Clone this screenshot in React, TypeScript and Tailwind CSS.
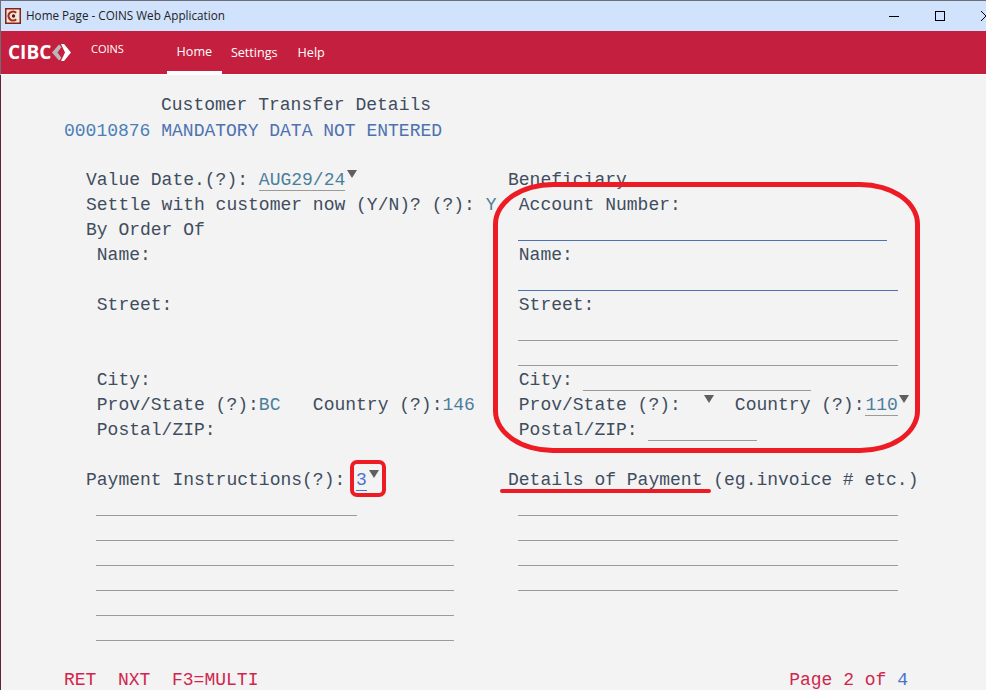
import type { ReactNode } from 'react';

const LABEL = 'text-[#3f4d5e]';

// one 25px terminal row, left and right column
const Row = ({ left, right }: { left?: ReactNode; right?: ReactNode }) => (
    <div className="grid h-[25px] grid-cols-[422px_1fr] pl-[85px] leading-[27px]">
        <div className="flex whitespace-pre">{left}</div>
        <div className="flex whitespace-pre">{right}</div>
    </div>
);

const Line = ({ width, className = 'border-[#9b9b9b]', indent = 'ml-[10px]' }: { width: string; className?: string; indent?: string }) => (
    <div className={`h-[24px] border-b ${width} ${className} ${indent}`} />
);

const Value = ({ text, className, width }: { text: string; className: string; width: string }) => (
    <span className={`h-[24px] border-b leading-[27px] ${width} ${className}`}>{text}</span>
);

const Arrow = ({ className = '' }: { className?: string }) => (
    <svg width="10" height="8" viewBox="0 0 10 8" className={`mt-[3px] shrink-0 ${className}`}>
        <polygon points="0,0 10,0 5,8" fill="#5f5f5f" />
    </svg>
);

const Text = ({ children }: { children: ReactNode }) => <span className={LABEL}>{children}</span>;

const App = () => {
    return (
        <div className="relative h-screen w-full overflow-hidden bg-[#f3f3f3] font-['Liberation_Mono',monospace] text-[18px]">
            {/* title bar */}
            <div className="flex h-[31px] items-center border-t border-l border-[#6d6f78] bg-[#d1e2fc] pl-[4px] font-['Open_Sans',sans-serif] text-[11.7px] text-[#222222]">
                <svg width="16" height="16" viewBox="0 0 16 16" className="shrink-0">
                    <rect x="0.75" y="0.75" width="14.5" height="14.5" fill="#f3e6dc" stroke="#8a2010" strokeWidth="1.5" />
                    <path d="M11.2 4.8 A4.5 4.5 0 1 0 11.2 11.2" fill="none" stroke="#a52a18" strokeWidth="2.2" />
                    <circle cx="8.5" cy="8" r="1.7" fill="#5c1a10" />
                </svg>
                <span className="ml-[5px]">Home Page - COINS Web Application</span>
                <div className="ml-auto flex items-center">
                    <div className="h-px w-[10px] bg-black" />
                    <div className="ml-[36px] h-[10px] w-[10px] border border-black" />
                    <svg width="5" height="10" viewBox="0 0 5 10" className="ml-[36px]">
                        <path d="M0 0 L5 5 L0 10" fill="none" stroke="#000" />
                    </svg>
                </div>
            </div>

            {/* nav */}
            <div className="flex h-[44px] border-b border-l border-b-white border-l-[#6d6f78] bg-[#c41f3e] font-['Open_Sans',sans-serif] text-[12.6px] text-white">
                <div className="ml-[7px] flex w-[83px] items-center pb-[1px]">
                    <span className="text-[19px] leading-none font-bold">CIBC</span>
                    <svg width="19" height="17" viewBox="0 0 19 17" className="ml-[1px]">
                        <polygon points="7,0.5 0,8.5 7,16.5 9.5,14 5.5,8.5 9.5,3" fill="#b9b9b9" />
                        <polygon points="9,0 12,0 19,8.5 12,17 9,17 13,8.5" fill="#ffffff" />
                    </svg>
                </div>
                <span className="mt-[10px] text-[11px] leading-[16px]">COINS</span>
                <div className="ml-[43px] flex h-[43px] w-[55px] justify-center border-b-[3px] border-white pt-[12px] leading-[18px]">Home</div>
                <span className="ml-[9px] pt-[13px] leading-[18px]">Settings</span>
                <span className="ml-[20px] pt-[13px] leading-[18px]">Help</span>
            </div>

            <div className="border-l border-[#5c2535] pt-[17px]">
                <div className="h-[25px] pl-[160px] leading-[27px] whitespace-pre"><Text>Customer Transfer Details</Text></div>
                <div className="h-[50px] pl-[63px] leading-[29px] whitespace-pre">
                    <span className="text-[#4a80b8]">00010876</span>
                    <span className="text-[#4d72b0]"> MANDATORY DATA NOT ENTERED</span>
                </div>

                <Row
                    left={<><Text>Value Date.(?): </Text><Value text="AUG29/24" className="border-[#9b9b9b] text-[#4a7f9c]" width="w-[86.4px]" /><Arrow className="ml-[2px]" /></>}
                    right={<Text>Beneficiary</Text>}
                />
                <Row
                    left={<><Text>Settle with customer now (Y/N)? (?): </Text><span className="text-[#4a7f9c]">Y</span></>}
                    right={<Text> Account Number:</Text>}
                />
                <Row left={<Text>By Order Of</Text>} right={<Line width="w-[369px]" className="border-[#4a72b4]" />} />
                <Row left={<Text> Name:</Text>} right={<Text> Name:</Text>} />
                <Row right={<Line width="w-[380px]" className="border-[#4a72b4]" />} />
                <Row left={<Text> Street:</Text>} right={<Text> Street:</Text>} />
                <Row right={<Line width="w-[380px]" />} />
                <Row right={<Line width="w-[380px]" />} />
                <Row left={<Text> City:</Text>} right={<><Text> City: </Text><Line width="w-[228px]" indent="ml-[-1px]" /></>} />
                <Row
                    left={<><Text> Prov/State (?):</Text><span className="text-[#4a7f9c]">BC</span><Text>   Country (?):</Text><span className="text-[#4a7f9c]">146</span></>}
                    right={<>
                        <Text> Prov/State (?):</Text>
                        <span className="w-[23px]" />
                        <Arrow />
                        <span className="w-[21px]" />
                        <Text>Country (?):</Text>
                        <span className="w-[1px]" />
                        <Value text="110" className="border-[#9b9b9b] text-[#4a7f9c]" width="w-[32.4px]" />
                        <Arrow className="ml-[1px]" />
                    </>}
                />
                <Row left={<Text> Postal/ZIP:</Text>} right={<><Text> Postal/ZIP: </Text><Line width="w-[109px]" indent="ml-0" /></>} />
                <Row />
                <Row
                    left={<><Text>Payment Instructions(?): </Text><Value text="3" className="border-[#4a72d0] text-[#4a72d0]" width="w-[11px]" /><Arrow className="ml-[2px]" /></>}
                    right={<Text>Details of Payment (eg.invoice # etc.)</Text>}
                />
                <Row left={<Line width="w-[261px]" />} right={<Line width="w-[380px]" />} />
                <Row left={<Line width="w-[358px]" />} right={<Line width="w-[380px]" />} />
                <Row left={<Line width="w-[358px]" />} right={<Line width="w-[380px]" />} />
                <Row left={<Line width="w-[358px]" />} right={<Line width="w-[380px]" />} />
                <Row left={<Line width="w-[358px]" />} />
                <Row left={<Line width="w-[358px]" />} />
                <div className="h-[25px]" />

                <div className="flex h-[25px] pr-[78px] pl-[63px] leading-[27px] whitespace-pre text-[#d0264e]">
                    <span>RET  NXT  F3=MULTI</span>
                    <span className="ml-auto">Page 2 of <span className="text-[#4a72d0]">4</span></span>
                </div>
            </div>

            {/* red annotations drawn over the form */}
            <div className="absolute top-[182px] left-[493px] h-[271px] w-[427px] rounded-[60px/42px] border-[5px] border-[#ed1c24]" />
            <div className="absolute top-[460px] left-[350px] h-[37px] w-[36px] rounded-[7px] border-[4px] border-[#ed1c24]" />
            <div className="absolute top-[489px] left-[500px] h-[4px] w-[211px] rounded-full bg-[#ed1c24]" />
        </div>
    );
};

export default App;
